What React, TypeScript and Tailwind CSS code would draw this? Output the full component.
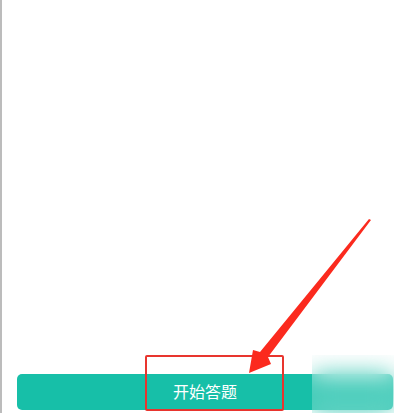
const Arrow = () => (
  <svg
    className="absolute left-0 top-0 pointer-events-none"
    width="400"
    height="413"
    viewBox="0 0 400 413"
  >
    <polygon
      points="369,220 266,357 269,364 247,373 251,350 258,352 367,219"
      fill="#fb2a1e"
    />
  </svg>
);

export default function App() {
  return (
    <div
      className="relative w-[400px] h-[413px] bg-white border-l-2 border-[#bcbcbc] flex flex-col justify-end overflow-hidden"
      style={{ fontFamily: '"Noto Sans", "Noto Sans CJK SC", sans-serif' }}
    >
      {/* Start button */}
      <div className="pl-[15px] pr-[7px] pb-[3px]">
        <button className="w-full h-[36px] rounded-[5px] bg-[#17bfa8] text-white text-[16px] flex items-center justify-center">
          开始答题
        </button>
      </div>

      {/* Annotation box */}
      <div className="absolute left-[143px] top-[355px] w-[139px] h-[56px] border-2 border-[#e8352e] rounded-[2px]" />

      <Arrow />

      {/* Watermark blur */}
      <div className="absolute left-[310px] top-[355px] w-[82px] h-[58px] backdrop-blur-md bg-white/20" />
    </div>
  );
}
